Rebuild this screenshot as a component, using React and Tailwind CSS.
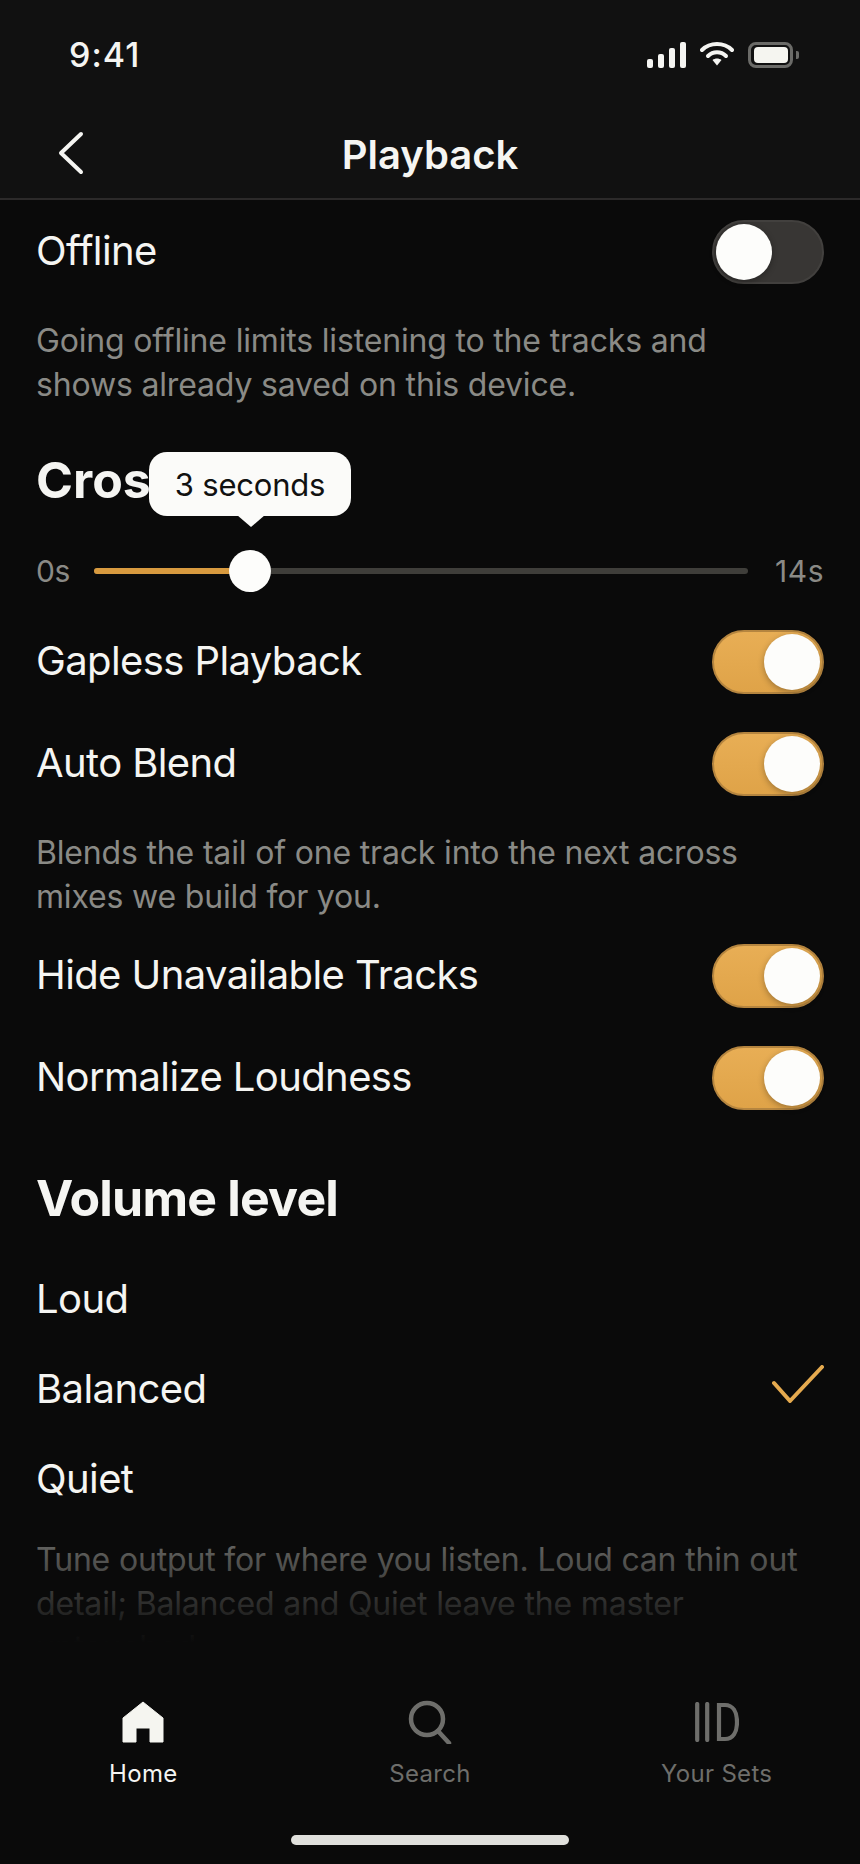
const FONT = "font-['Inter',sans-serif]";

function Toggle({ on }) {
  return (
    <div className={on
      ? 'flex h-16 w-28 shrink-0 items-center justify-end rounded-full border-2 border-[#b5853f] bg-gradient-to-b from-[#e8ae55] to-[#dfa348] p-0.5'
      : 'flex h-16 w-28 shrink-0 items-center justify-start rounded-full border-2 border-[#42403e] bg-[#383634] p-0.5'}>
      <div className="h-14 w-14 rounded-full bg-[#fdfdfb] shadow-[0_2px_6px_rgba(0,0,0,0.3)]" />
    </div>
  );
}

function ToggleRow({ label, on, className }) {
  return (
    <div className={`flex h-16 items-center justify-between ${className}`}>
      <span className="pb-[3px] text-[40px] leading-none tracking-[-0.6px] text-[#f5f5f2]">{label}</span>
      <Toggle on={on} />
    </div>
  );
}

function Hint({ children, className }) {
  return <p className={`max-w-[768px] text-[32px] leading-[44px] tracking-[-0.17px] text-[#8a8a86] ${className}`}>{children}</p>;
}

function OptionRow({ label, checked }) {
  return (
    <div className="flex h-[90px] items-center justify-between">
      <span className="pb-[3px] text-[40px] leading-none tracking-[-0.6px] text-[#f5f5f2]">{label}</span>
      {checked && (
        <svg className="mb-3" width="52" height="38" viewBox="0 0 52 38" fill="none" stroke="#e5aa4f" strokeWidth="4" strokeLinecap="round" strokeLinejoin="round">
          <path d="M2 18 L18 36 L50 2" />
        </svg>
      )}
    </div>
  );
}

function StatusIcons() {
  return (
    <div className="flex items-center">
      <div className="flex h-[26px] items-end gap-[5px]">
        <div className="h-[9px] w-[6px] rounded-[2px] bg-[#f5f5f2]" />
        <div className="h-[14px] w-[6px] rounded-[2px] bg-[#f5f5f2]" />
        <div className="h-[20px] w-[6px] rounded-[2px] bg-[#f5f5f2]" />
        <div className="h-[26px] w-[6px] rounded-[2px] bg-[#f5f5f2]" />
      </div>
      <svg className="ml-[14px] mb-[3px]" width="34" height="24" viewBox="0 0 34 24" fill="none" stroke="#f5f5f2" strokeWidth="4" strokeLinecap="round">
        <path d="M2 8 C10 0 24 0 32 8" />
        <path d="M8 14 C13 9 21 9 26 14" />
        <path d="M12.5 18 L17 23.5 L21.5 18 C19 16 15 16 12.5 18 Z" fill="#f5f5f2" stroke="none" />
      </svg>
      <div className="ml-[14px] flex items-center">
        <div className="flex h-[26px] w-[45px] items-center justify-center rounded-[8px] border-[3px] border-[#6b6b68]">
          <div className="h-[16px] w-[34px] rounded-[4px] bg-[#f5f5f0]" />
        </div>
        <div className="ml-[3px] h-[8px] w-[3px] rounded-r-[2px] bg-[#6b6b68]" />
      </div>
    </div>
  );
}

function TabItem({ label, active, children }) {
  return (
    <div className="flex flex-1 flex-col items-center">
      <div className="flex h-[44px] items-center justify-center">{children}</div>
      <span className={`mt-[16px] text-[24px] leading-[28px] tracking-[0.3px] ${active ? 'text-[#f5f5f2]' : 'text-[#6e6e6b]'}`}>{label}</span>
    </div>
  );
}

export default function App() {
  return (
    <div className={`flex h-[1864px] w-[860px] flex-col overflow-hidden bg-[#0a0a0a] ${FONT}`}>
      {/* header */}
      <div className="h-[200px] shrink-0 border-b-2 border-[#2c2a2a] bg-[#111111] pt-[35px]">
        <div className="flex h-[40px] items-center justify-between pl-[69px] pr-[61px]">
          <span className="text-[34px] font-medium leading-10 tracking-[1px] text-[#f5f5f2]">9:41</span>
          <StatusIcons />
        </div>
        <div className="relative mt-[45px] flex h-[70px] items-center justify-center">
          <svg className="absolute left-[57px] top-[11px]" width="28" height="44" viewBox="0 0 28 44" fill="none" stroke="#f5f5f2" strokeWidth="4" strokeLinecap="round" strokeLinejoin="round">
            <path d="M24 3 L4 22 L24 41" />
          </svg>
          <span className="text-[40px] font-semibold leading-none text-[#f5f5f2]">Playback</span>
        </div>
      </div>

      {/* settings list */}
      <div className="relative min-h-0 flex-1 overflow-hidden px-9 pt-5">
        <ToggleRow label="Offline" on={false} />
        <Hint className="mt-[35px]">Going offline limits listening to the tracks and shows already saved on this device.</Hint>

        <h2 className="mt-[43px] h-[60px] text-[50px] font-bold leading-[60px] text-[#f5f5f2]">Crossfade</h2>

        <div className="mt-10 flex h-[42px] items-center">
          <span className="w-[58px] shrink-0 text-[30px] leading-none tracking-[-0.5px] text-[#8a8a86]">0s</span>
          <div className="relative h-[6px] w-[654px] rounded-full bg-[#3f3e3a]">
            <div className="h-full w-[156px] rounded-l-full bg-[#d89a3f]" />
            <div className="absolute left-[135px] top-[-18px] h-[42px] w-[42px] rounded-full bg-[#fdfdfb]" />
            <div className="absolute left-[55px] top-[-116px] flex h-[64px] w-[202px] items-center justify-center rounded-[18px] bg-[#fbfbf9] text-[31px] leading-none tracking-[-0.2px] text-[#111111]">
              3 seconds
              <div className="absolute left-[88px] top-[63px] h-0 w-0 border-x-[14px] border-t-[12px] border-x-transparent border-t-[#fbfbf9]" />
            </div>
          </div>
          <span className="ml-auto text-[30px] leading-none tracking-[0.5px] text-[#8a8a86]">14s</span>
        </div>

        <ToggleRow label="Gapless Playback" on className="mt-[38px]" />
        <ToggleRow label="Auto Blend" on className="mt-[38px]" />
        <Hint className="mt-[35px]">Blends the tail of one track into the next across mixes we build for you.</Hint>
        <ToggleRow label="Hide Unavailable Tracks" on className="mt-[25px]" />
        <ToggleRow label="Normalize Loudness" on className="mt-[38px]" />

        <h2 className="mt-[58px] h-[60px] text-[50px] font-bold leading-[60px] tracking-[-0.8px] text-[#f5f5f2]">Volume level</h2>

        <div className="mt-[27px]">
          <OptionRow label="Loud" />
          <OptionRow label="Balanced" checked />
          <OptionRow label="Quiet" />
        </div>
        <Hint className="mt-[13px]">Tune output for where you listen. Loud can thin out detail; Balanced and Quiet leave the master untouched.</Hint>

        <div className="absolute inset-x-0 bottom-0 h-[150px] bg-gradient-to-b from-[#0a0a0a00] to-[#0a0a0a] to-95%" />
      </div>

      {/* tab bar */}
      <div className="h-[214px] shrink-0 pt-[50px]">
        <div className="flex">
          <TabItem label="Home" active>
            <svg width="42" height="42" viewBox="0 0 42 42" fill="#f5f5f0" stroke="#f5f5f0" strokeWidth="1" strokeLinejoin="round">
              <path d="M21 1 L41 17 L41 41 L28 41 L28 27 L14 27 L14 41 L1 41 L1 17 Z" />
            </svg>
          </TabItem>
          <TabItem label="Search">
            <svg width="44" height="44" viewBox="0 0 44 44" fill="none" stroke="#6e6e6b" strokeWidth="4.5" strokeLinecap="round">
              <circle cx="19" cy="19" r="16" />
              <path d="M30 31 L41 43" />
            </svg>
          </TabItem>
          <TabItem label="Your Sets">
            <svg width="44" height="40" viewBox="0 0 44 40" fill="none" stroke="#6e6e6b" strokeWidth="4.2" strokeLinecap="round">
              <path d="M2.200 2 L2.200 38" />
              <path d="M12.200 2 L12.200 38" />
              <path d="M24 3 L30 3 C38 3 42 10 42 20 C42 30 38 37 30 37 L24 37 Z" />
            </svg>
          </TabItem>
        </div>
        <div className="mx-auto mt-[47px] h-[10px] w-[278px] rounded-full bg-[#e0e0dc]" />
      </div>
    </div>
  );
}
